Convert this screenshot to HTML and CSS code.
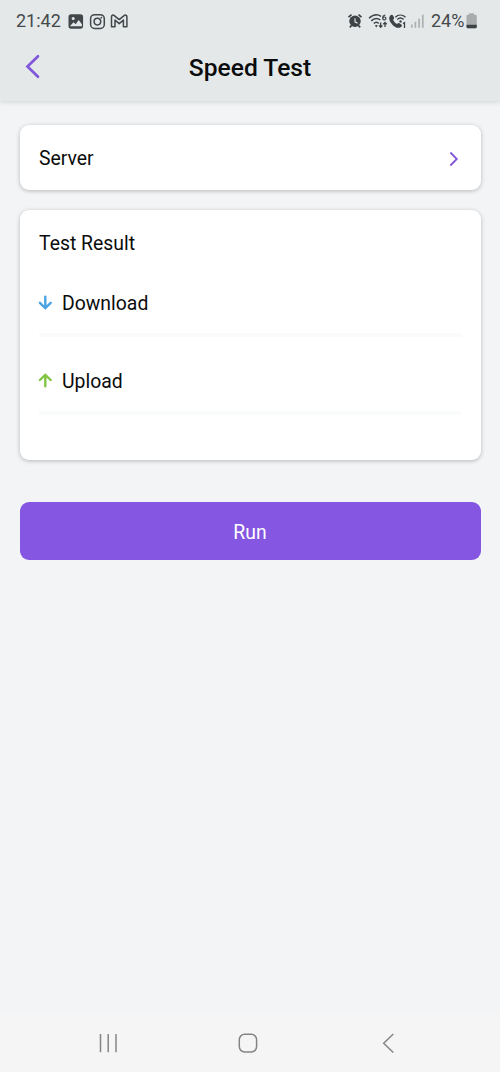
FILE: index.html
```html
<!DOCTYPE html>
<html lang="en">
<head>
<meta charset="utf-8">
<title>Speed Test</title>
<link rel="stylesheet" href="styles.css">
</head>
<body>
<div class="screen">
  <header class="header">
    <div class="status">
      <div class="status-left">
        <span class="clock">21:42</span>
        <svg class="notifications" width="60" height="18" viewBox="68 12 60 18" fill="none" stroke="#42474a">
          <rect x="68.5" y="14.3" width="14.6" height="14.4" rx="2.6" fill="#42474a" stroke="none"/>
          <path d="M70.3 25.7l3.2-3.5 2.2 2 3-4.2 3.2 4.3v1.9h-11.6z" fill="#e4e8e9" stroke="none"/>
          <circle cx="73.2" cy="18.5" r="1.5" fill="#e4e8e9" stroke="none"/>
          <rect x="90.6" y="14.7" width="13.7" height="13.7" rx="4" stroke-width="1.5"/>
          <circle cx="97.4" cy="21.6" r="3.3" stroke-width="1.5"/>
          <circle cx="101.4" cy="17.6" r=".9" fill="#42474a" stroke="none"/>
          <path d="M111.5 16.8c0-1.8 1.7-2.1 2.8-1.2l4.900 4 4.900-4c1.100-.9 2.800-.6 2.800 1.200v10h-3.500v-6.700l-4.200 3.500-4.200-3.500v6.700h-3.500z" stroke-width="1.500" stroke-linejoin="round"/>
        </svg>
      </div>
      <div class="status-right">
        <svg class="indicators" width="78" height="18" viewBox="347 12 78 18" fill="none" stroke="#3d4245">
          <circle cx="355" cy="21.300" r="5.700" fill="#3d4245" stroke="none"/>
          <path d="M348.500 17.200l3-2.500M361.500 17.200l-3-2.500M351.700 25.200l-1.900 2.200M358.300 25.200l1.900 2.200" stroke-width="1.700"/>
          <path d="M355 18.200v3.600l2.600 1.400" stroke="#e4e8e9" stroke-width="1.100"/>
          <path d="M369 18.300c4.300-4 9-4 12-2M371.300 20.900c2.700-2.700 6.300-2.800 9-1M373.800 23.500c1.500-1.500 3.500-1.500 5 0" stroke-width="1.500"/>
          <path d="M376.300 27.500l-1.500-1.900q1.500-1.200 3 0z" fill="#3d4245" stroke="none"/>
          <path d="M385.300 15.100c-2.200.2-2.800 1.800-2.600 3.300.2 2.100 3.400 1.700 3.200-.1-.2-1.600-2.100-1.700-3-.5" stroke-width="1.200"/>
          <path d="M380.700 22.500v4.500M379 25.400l1.700 1.800 1.700-1.800M385 27v-4.500M383.300 24.200l1.700-1.800 1.700 1.800" stroke-width="1.300"/>
          <path d="M390.500 15.200c1-.8 1.900-.7 2.500.4l1 2c.4.8-.2 1.500-1 2.100.9 2 2.100 3.300 4.100 4.300.8-.9 1.500-1.200 2.300-.7l1.900 1.200c.9.600.8 1.500 0 2.200-3 2.500-6.800.6-9.300-2.500-2.600-3-3.900-6.700-1.500-9z" fill="#3d4245" stroke="none"/>
          <path d="M395.300 17.200c3-2.800 7.200-2.800 10.200 0M397.300 19.400c1.900-1.800 4.400-1.800 6.300 0" stroke-width="1.400"/>
          <circle cx="400.500" cy="21.500" r="1.200" fill="#3d4245" stroke="none"/>
          <path d="M403 23.600l1.500-.9v5.200" stroke-width="1.300"/>
          <path d="M411.800 24.500v3.300M415.400 21.700v6.100M419.100 18.700v9.100M422.800 14.700v13.100" stroke="#acb0b1" stroke-width="1.700"/>
        </svg>
        <span class="charge">24%</span>
        <svg class="battery" width="12" height="18" viewBox="466 12 12 18">
          <path d="M469 13.200h5v1.600h1.500q1.300 0 1.300 1.300v10.600q0 1.500-1.500 1.500h-7.300q-1.500 0-1.500-1.500v-10.600q0-1.300 1.300-1.300h1.200z" fill="#a8acad"/>
          <path d="M466.500 24.800h10.300v1.900q0 1.500-1.500 1.500h-7.300q-1.500 0-1.500-1.500z" fill="#3d4245"/>
        </svg>
      </div>
    </div>
    <div class="titlebar">
      <svg class="back" width="20" height="28" viewBox="0 0 20 28"><path d="M14 3.300L3.500 13.500 14 23.700"/></svg>
      <h1 class="title">Speed Test</h1>
      <span></span>
    </div>
  </header>
  <main class="content">
    <section class="card server">
      <span>Server</span>
      <svg class="chevron" width="12" height="18" viewBox="0 0 12 18"><path d="M1.400 2.500L7.800 9l-6.400 6.500"/></svg>
    </section>
    <section class="card result">
      <h2 class="subtitle">Test Result</h2>
      <div class="metric">
        <svg class="arrow down" width="14" height="16" viewBox="0 0 14 16"><path d="M6.300 .6v11.200M.9 6.800L6.300 12l5.400-5.200"/></svg>
        <span>Download</span>
      </div>
      <div class="metric">
        <svg class="arrow up" width="14" height="16" viewBox="0 0 14 16"><path d="M6.300 12.200V1M.9 6L6.300.8 11.700 6"/></svg>
        <span>Upload</span>
      </div>
    </section>
    <button class="run">Run</button>
  </main>
  <nav class="nav">
    <svg width="22" height="22" viewBox="0 0 22 22"><path d="M2.500 2v18.300M10.200 2v18.300M18 2v18.300"/></svg>
    <svg width="22" height="22" viewBox="0 0 22 22"><rect x="1.300" y="2.300" width="17.300" height="17.600" rx="5.300"/></svg>
    <svg width="22" height="22" viewBox="0 0 22 22"><path d="M16.300 2L6.700 11.200l9.600 9.300"/></svg>
  </nav>
</div>
</body>
</html>
```
FILE: styles.css
```css
* { box-sizing: border-box; }
body {
  margin: 0;
  font-family: Roboto, "Liberation Sans", sans-serif;
  color: #0b0c0c;
}
svg { display: block; flex: none; }
.screen {
  display: flex;
  flex-direction: column;
  height: 1072px;
  background: #f2f4f6;
}
.header {
  height: 101px;
  background: #e4e8e9;
  box-shadow: 0 1px 5px rgba(0, 0, 0, .14);
}
.status {
  display: flex;
  justify-content: space-between;
  height: 42px;
  padding: 0 22px 0 16px;
  align-items: center;
  font-size: 18px;
  line-height: 42px;
  color: #45494c;
}
.status-left, .status-right { display: flex; align-items: center; }
.clock { width: 52px; }
.charge { width: 35px; margin-left: 6px; }
.titlebar {
  display: grid;
  grid-template-columns: 1fr auto 1fr;
  align-items: center;
  height: 50px;
  padding: 0 24px;
}
.back {
  fill: none;
  stroke: #8056dc;
  stroke-width: 2.700;
  stroke-linecap: round;
}
.title { margin: 0; padding-top: 2px; font-size: 24.600px; font-weight: 500; line-height: 32px; }
.content {
  flex: 1;
  padding: 24px 19.500px 0;
  font-size: 19.400px;
  line-height: 24px;
}
.card {
  border-radius: 9px;
  background: #fff;
  box-shadow: 0 1px 4px rgba(0, 0, 0, .25);
}
.server {
  display: flex;
  align-items: center;
  justify-content: space-between;
  height: 65px;
  margin-bottom: 20px;
  padding: 2px 20px 0 19.500px;
}
.chevron { fill: none; stroke: #8056dc; stroke-width: 1.800; }
.result { height: 250px; padding: 22px 20px 0 19.500px; }
.subtitle { margin: 0 0 24px; font: inherit; }
.metric {
  display: flex;
  align-items: center;
  height: 57px;
  padding-bottom: 5px;
  margin-bottom: 21px;
  border-bottom: 4px solid #fafbfb;
}
.arrow { margin-right: 9px; overflow: visible; fill: none; stroke-width: 2.400; stroke-linecap: round; }
.down { stroke: #4ba3e3; }
.up { stroke: #83c442; }
.run {
  display: block;
  width: 100%;
  height: 58px;
  margin-top: 42px;
  padding: 3px 0 0;
  border: 0;
  border-radius: 9px;
  background: #8456e1;
  color: #fff;
  font: inherit;
}
.nav {
  display: flex;
  justify-content: space-between;
  height: 58px;
  padding: 18px 101px 0 98px;
  background: #f5f5f5;
}
.nav svg { fill: none; stroke: #858585; stroke-width: 1.500; }
```
